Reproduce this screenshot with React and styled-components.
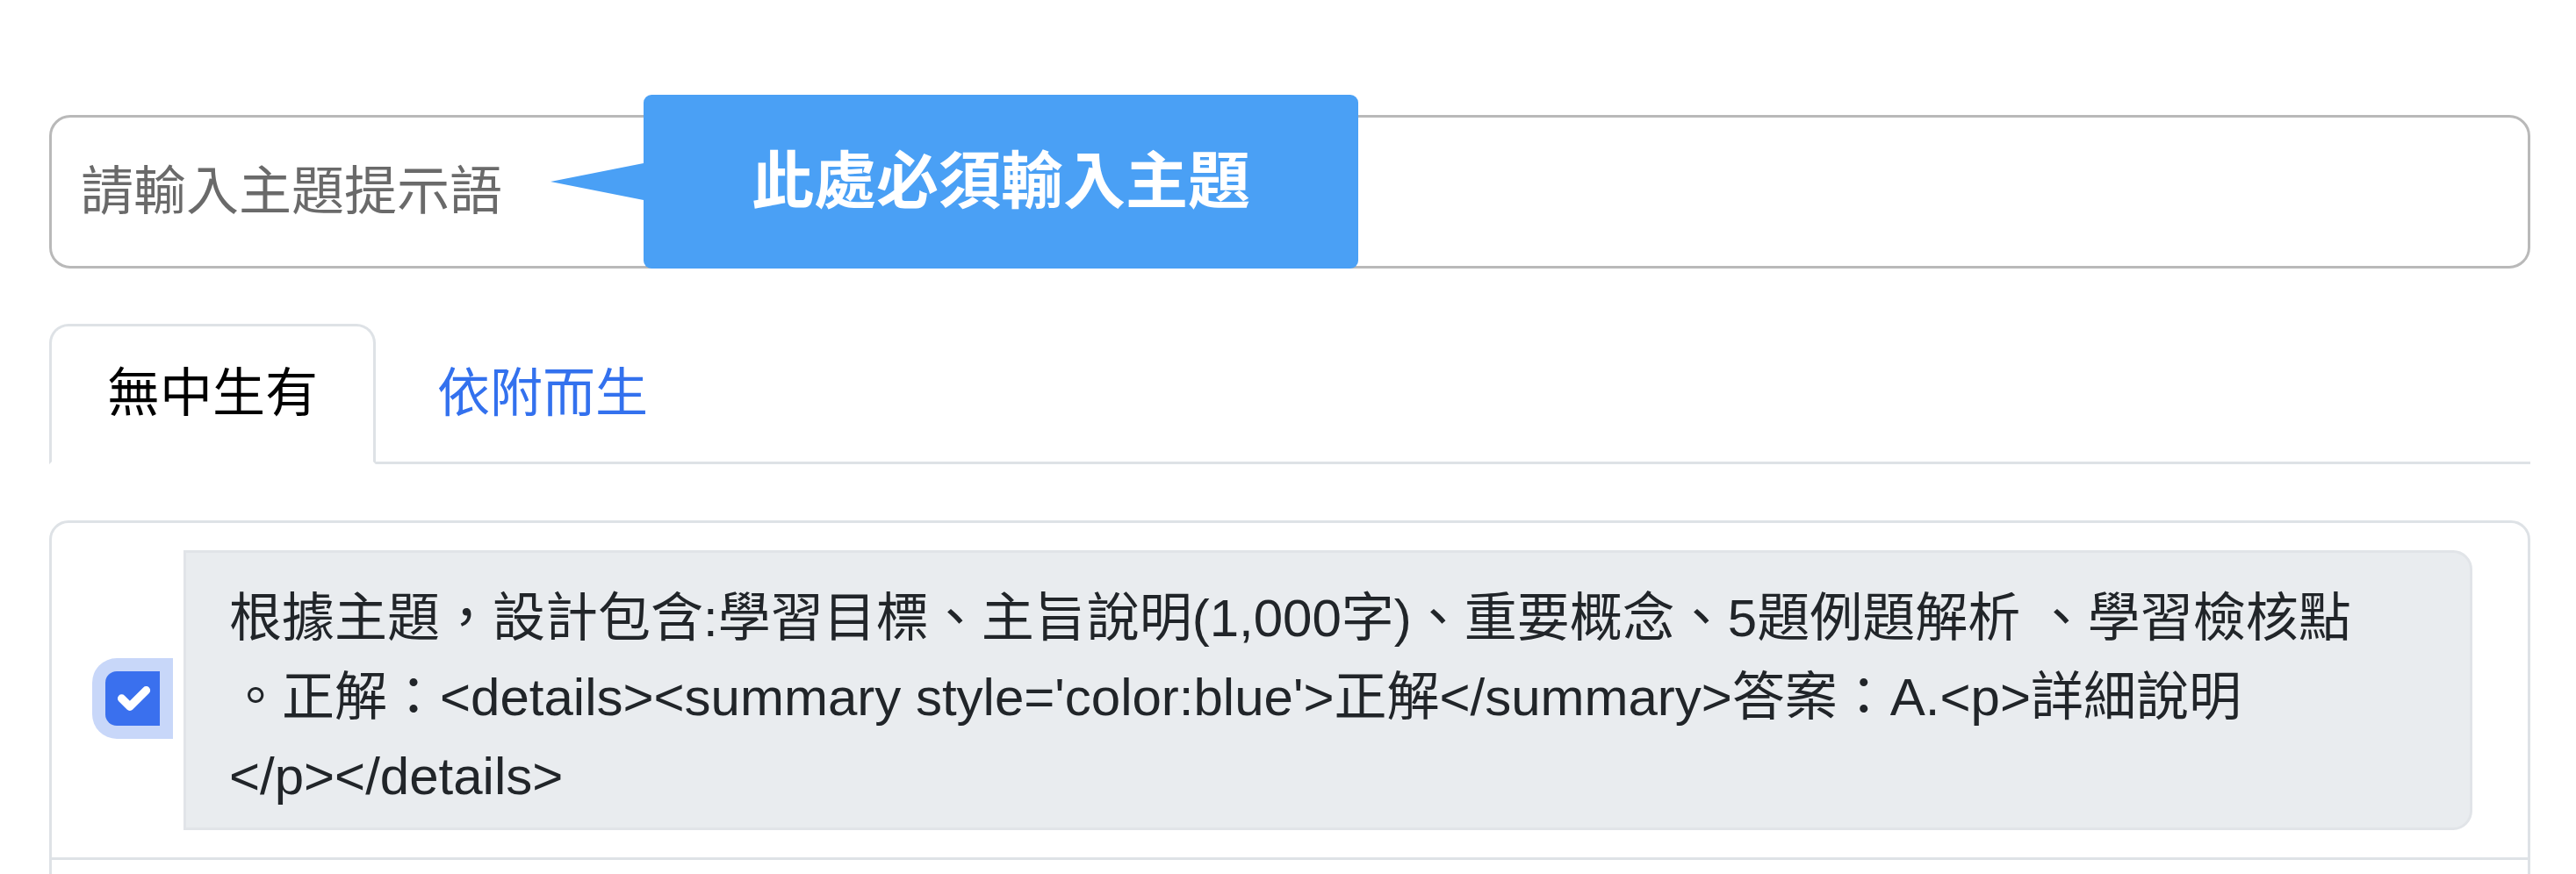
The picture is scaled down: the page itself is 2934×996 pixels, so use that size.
import React from "react";
import styled, { createGlobalStyle } from "styled-components";

const GlobalStyle = createGlobalStyle`
  html, body {
    margin: 0;
    padding: 0;
    overflow: hidden;
    background: #ffffff;
  }
  body {
    font-family: "Liberation Sans", "Noto Sans CJK TC", sans-serif;
    color: #212529;
    font-size: 60px;
    line-height: 1.5;
  }
  * { box-sizing: border-box; }
`;

const Page = styled.div`
  padding: 131px 52px 0 56px;
`;

const TopicField = styled.div`
  position: relative;
`;

const TopicInput = styled.input`
  display: block;
  width: 100%;
  height: 175px;
  margin: 0;
  padding: 0 33px;
  border: 3px solid #b9b9b9;
  border-radius: 24px;
  background: #fff;
  font-family: inherit;
  font-size: 60px;
  color: #212529;
  outline: none;
  &::placeholder {
    color: #6a6a6a;
  }
`;

const Tooltip = styled.div`
  position: absolute;
  left: 677px;
  top: -23px;
  width: 814px;
  height: 198px;
  border-radius: 9px;
  background: #4aa0f5;
  color: #ffffff;
  font-size: 71px;
  font-weight: 700;
  display: flex;
  align-items: center;
  justify-content: center;
  &::before {
    content: "";
    position: absolute;
    right: 100%;
    top: 50%;
    transform: translateY(-50%);
    border-right: 106px solid #4aa0f5;
    border-top: 21px solid transparent;
    border-bottom: 21px solid transparent;
  }
`;

const TabList = styled.div`
  display: flex;
  gap: 4px;
  margin-top: 63px;
  border-bottom: 3px solid #dee2e6;
`;

const Tab = styled.div`
  padding: 32px 63px;
  margin-bottom: -3px;
  border: 3px solid ${(p) => (p.$active ? "#dee2e6" : "transparent")};
  border-bottom-color: ${(p) => (p.$active ? "#ffffff" : "transparent")};
  border-radius: 22px 22px 0 0;
  background: ${(p) => (p.$active ? "#ffffff" : "transparent")};
  color: ${(p) => (p.$active ? "#000000" : "#3371ee")};
  line-height: 90px;
  cursor: pointer;
`;

const Card = styled.div`
  margin-top: 64px;
  border: 3px solid #dee2e6;
  border-radius: 22px;
`;

const Item = styled.div`
  display: flex;
  align-items: center;
  padding: 31px 63px 31px 61px;
  min-height: ${(p) => p.$minHeight || "auto"};
  & + & {
    border-top: 3px solid #dee2e6;
  }
`;

const Check = styled.span`
  flex: none;
  width: 62px;
  height: 62px;
  margin: 18px 27px 0 0;
  border-radius: 13px 0 0 13px;
  background: #3a70ee;
  box-shadow: 0 0 0 15px #c8d7f9;
  display: flex;
  align-items: center;
  justify-content: center;
  svg {
    display: block;
  }
`;

const PromptBox = styled.div`
  flex: 1;
  padding: 30px 40px 13px 49px;
  background: #e9ecef;
  border: 3px solid #e1e4e8;
  border-radius: 0 22px 22px 0;
  white-space: pre-wrap;
  color: #212529;
  font-size: 60px;
  line-height: 90px;
`;

const CheckMark = () => (
  <svg width="62" height="62" viewBox="0 0 20 20" aria-hidden="true">
    <path
      d="m6 10 3 3 6-6"
      fill="none"
      stroke="#ffffff"
      strokeWidth="3"
      strokeLinecap="round"
      strokeLinejoin="round"
    />
  </svg>
);

const promptText =
  "根據主題，設計包含:學習目標、主旨說明(1,000字)、重要概念、5題例題解析 、學習檢核點\n" +
  "。正解：<details><summary style='color:blue'>正解</summary>答案：A.<p>詳細說明\n" +
  "</p></details>";

export default function App() {
  return (
    <>
      <GlobalStyle />
      <Page>
        <TopicField>
          <TopicInput type="text" placeholder="請輸入主題提示語" />
          <Tooltip>此處必須輸入主題</Tooltip>
        </TopicField>
        <TabList>
          <Tab $active>無中生有</Tab>
          <Tab>依附而生</Tab>
        </TabList>
        <Card>
          <Item>
            <Check>
              <CheckMark />
            </Check>
            <PromptBox>{promptText}</PromptBox>
          </Item>
          <Item $minHeight="160px" />
        </Card>
      </Page>
    </>
  );
}
